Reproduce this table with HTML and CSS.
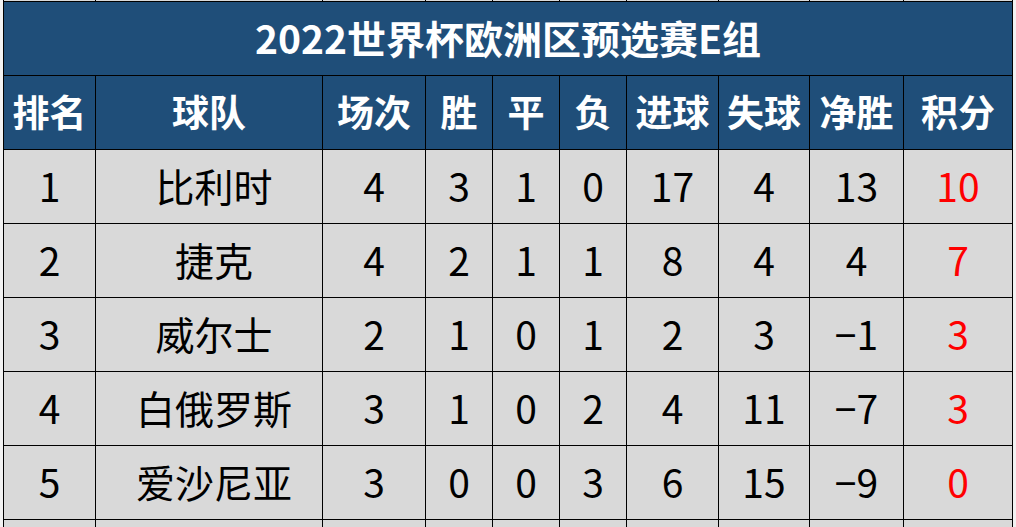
FILE: index.html
```html
<!DOCTYPE html>
<html lang="zh-CN">
<head>
<meta charset="utf-8">
<title>2022世界杯欧洲区预选赛E组</title>
<link rel="stylesheet" href="styles.css">
</head>
<body>
<table class="standings">
  <colgroup>
    <col class="c-rank"><col class="c-team"><col class="c-played"><col class="c-w"><col class="c-d"><col class="c-l"><col class="c-gf"><col class="c-ga"><col class="c-gd"><col class="c-pts">
  </colgroup>
  <tbody>
    <tr class="edge"><td></td><td></td><td></td><td></td><td></td><td></td><td></td><td></td><td></td><td></td></tr>
    <tr class="title"><td colspan="10">2022世界杯欧洲区预选赛E组</td></tr>
    <tr class="head">
      <td>排名</td><td>球队</td><td>场次</td><td>胜</td><td>平</td><td>负</td><td>进球</td><td>失球</td><td>净胜</td><td>积分</td>
    </tr>
    <tr class="row"><td>1</td><td class="team">比利时</td><td>4</td><td>3</td><td>1</td><td>0</td><td>17</td><td>4</td><td>13</td><td class="pts">10</td></tr>
    <tr class="row"><td>2</td><td class="team">捷克</td><td>4</td><td>2</td><td>1</td><td>1</td><td>8</td><td>4</td><td>4</td><td class="pts">7</td></tr>
    <tr class="row"><td>3</td><td class="team">威尔士</td><td>2</td><td>1</td><td>0</td><td>1</td><td>2</td><td>3</td><td>−1</td><td class="pts">3</td></tr>
    <tr class="row"><td>4</td><td class="team">白俄罗斯</td><td>3</td><td>1</td><td>0</td><td>2</td><td>4</td><td>11</td><td>−7</td><td class="pts">3</td></tr>
    <tr class="row"><td>5</td><td class="team">爱沙尼亚</td><td>3</td><td>0</td><td>0</td><td>3</td><td>6</td><td>15</td><td>−9</td><td class="pts">0</td></tr>
    <tr class="edge tail"><td></td><td></td><td></td><td></td><td></td><td></td><td></td><td></td><td></td><td></td></tr>
  </tbody>
</table>
</body>
</html>
```

FILE: styles.css
```css
html, body {
  margin: 0;
  padding: 0;
  background: #f2f2f2;
  overflow: hidden;
}

.standings {
  margin: -1px 0 0 3px;
  border-collapse: collapse;
  table-layout: fixed;
  width: 1009px;
  font-family: "Noto Sans CJK SC", "Microsoft YaHei", sans-serif;
}

.c-rank { width: 92px; }
.c-team { width: 227px; }
.c-played { width: 103px; }
.c-w, .c-d, .c-l { width: 67px; }
.c-gf { width: 92px; }
.c-ga { width: 91px; }
.c-gd { width: 94px; }
.c-pts { width: 109px; }

.standings td {
  border: 1px solid #000;
  padding: 0;
  text-align: center;
  vertical-align: middle;
  white-space: nowrap;
  overflow: hidden;
  line-height: 1;
}

.edge td {
  height: 1px;
  background: #d9d9d9;
}

.title td {
  height: 71px;
  background: #1f4e79;
  color: #fff;
  font-weight: 700;
  font-size: 39px;
  padding-bottom: 2px;
}

.head td {
  height: 71px;
  background: #1f4e79;
  color: #fff;
  font-weight: 700;
  font-size: 37px;
  padding-bottom: 2px;
}

.row td {
  height: 70px;
  background: #d9d9d9;
  color: #000;
  font-size: 39px;
  padding-bottom: 3px;
}

.row td.team {
  padding-left: 10px;
}

.row td.pts {
  color: #ff0000;
}

.tail td {
  height: 20px;
}
```
